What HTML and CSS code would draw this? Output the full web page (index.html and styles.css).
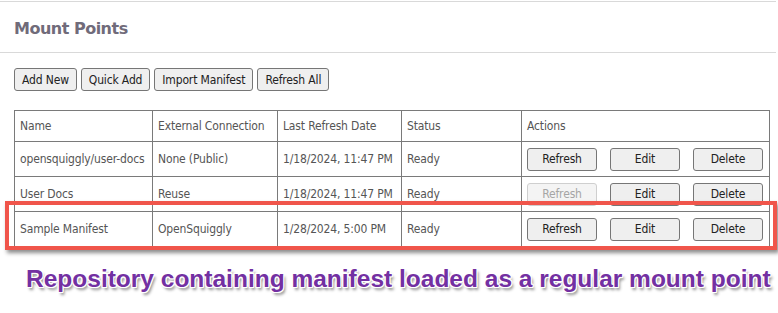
FILE: index.html
```html
<!DOCTYPE html>
<html lang="en">
<head>
  <meta charset="UTF-8" />
  <title>Mount Points</title>
  <link rel="stylesheet" href="styles.css">
</head>
<body>
  <div class="page">
    <div class="title-bar">
      <h2>Mount Points</h2>
    </div>

    <div class="toolbar">
      <button class="btn">Add New</button>
      <button class="btn">Quick Add</button>
      <button class="btn">Import Manifest</button>
      <button class="btn">Refresh All</button>
    </div>

    <div class="table-wrap">
      <table class="mounts">
        <colgroup>
          <col class="c-name">
          <col class="c-conn">
          <col class="c-date">
          <col class="c-status">
          <col class="c-actions">
        </colgroup>
        <thead>
          <tr>
            <th>Name</th>
            <th>External Connection</th>
            <th>Last Refresh Date</th>
            <th>Status</th>
            <th>Actions</th>
          </tr>
        </thead>
        <tbody>
          <tr>
            <td>opensquiggly/user-docs</td>
            <td>None (Public)</td>
            <td>1/18/2024, 11:47 PM</td>
            <td>Ready</td>
            <td>
              <div class="actions">
                <button class="btn act">Refresh</button>
                <button class="btn act">Edit</button>
                <button class="btn act">Delete</button>
              </div>
            </td>
          </tr>
          <tr>
            <td>User Docs</td>
            <td>Reuse</td>
            <td>1/18/2024, 11:47 PM</td>
            <td>Ready</td>
            <td>
              <div class="actions">
                <button class="btn act" disabled>Refresh</button>
                <button class="btn act">Edit</button>
                <button class="btn act">Delete</button>
              </div>
            </td>
          </tr>
          <tr>
            <td>Sample Manifest</td>
            <td>OpenSquiggly</td>
            <td>1/28/2024, 5:00 PM</td>
            <td>Ready</td>
            <td>
              <div class="actions">
                <button class="btn act">Refresh</button>
                <button class="btn act">Edit</button>
                <button class="btn act">Delete</button>
              </div>
            </td>
          </tr>
        </tbody>
      </table>

      <!-- annotation overlay -->
      <div class="highlight"></div>
    </div>

    <p class="callout">Repository containing manifest loaded as a regular mount point</p>
  </div>
</body>
</html>
```

FILE: styles.css
```css
* { box-sizing: border-box; }
body {
  margin: 0;
  background: #fff;
  font-family: 'DejaVu Sans Condensed', 'DejaVu Sans', Tahoma, Verdana, sans-serif;
  font-size: 12px;
  color: #555;
}
.page {
  position: relative;
  width: 778px;
  height: 313px;
  overflow: hidden;
}
.title-bar {
  margin: 1px 2px 0 0;
  border-top: 1px solid #d9d9d9;
  border-bottom: 1px solid #d9d9d9;
  height: 52px;
}
h2 {
  margin: 0;
  padding: 17px 0 0 14px;
  font-family: 'DejaVu Sans', Tahoma, sans-serif;
  font-size: 16px;
  line-height: 20px;
  letter-spacing: -0.5px;
  color: #706b7a;
}
.toolbar {
  display: flex;
  gap: 4px;
  padding: 15px 0 0 14px;
  height: 57px;
}
.btn {
  height: 23px;
  padding: 0 7px;
  font-family: inherit;
  font-size: 12px;
  letter-spacing: -0.15px;
  color: #222;
  background: #efefef;
  border: 1px solid #767676;
  border-radius: 3px;
}
.btn:disabled {
  color: #a5a5a5;
  background: #f4f4f4;
  border-color: #cfcfcf;
}
.table-wrap {
  position: relative;
  padding-left: 14px;
}
.mounts {
  width: 756px;
  border-collapse: collapse;
  table-layout: fixed;
  letter-spacing: -0.15px;
}
.c-name { width: 138px; }
.c-conn { width: 125px; }
.c-date { width: 124px; }
.c-status { width: 120px; }
.mounts th,
.mounts td {
  border: 1px solid #7a7a7a;
  padding: 0 5px;
  text-align: left;
  white-space: nowrap;
}
.mounts th {
  height: 31px;
  font-weight: normal;
  color: #555;
}
.mounts td {
  height: 35px;
}
.actions {
  display: flex;
  justify-content: space-between;
  padding-right: 1px;
}
.btn.act {
  width: 70px;
  padding: 0;
}
.highlight {
  position: absolute;
  left: 5px;
  top: 91px;
  width: 772px;
  height: 49px;
  border: 4px solid #f0554b;
  box-shadow: 2px 3px 4px rgba(0, 0, 0, 0.45);
}
.callout {
  margin: 18px 0 0 26px;
  font-family: 'Liberation Sans', Arial, sans-serif;
  font-weight: bold;
  font-size: 24.5px;
  line-height: 28px;
  color: #7330a2;
  white-space: nowrap;
  text-shadow:
    -1px -1px 0 #fff, 1px -1px 0 #fff, -1px 1px 0 #fff, 1px 1px 0 #fff,
    0 -1px 0 #fff, 0 1px 0 #fff, -1px 0 0 #fff, 1px 0 0 #fff,
    2px 3px 3px rgba(0, 0, 0, 0.45);
}
```
